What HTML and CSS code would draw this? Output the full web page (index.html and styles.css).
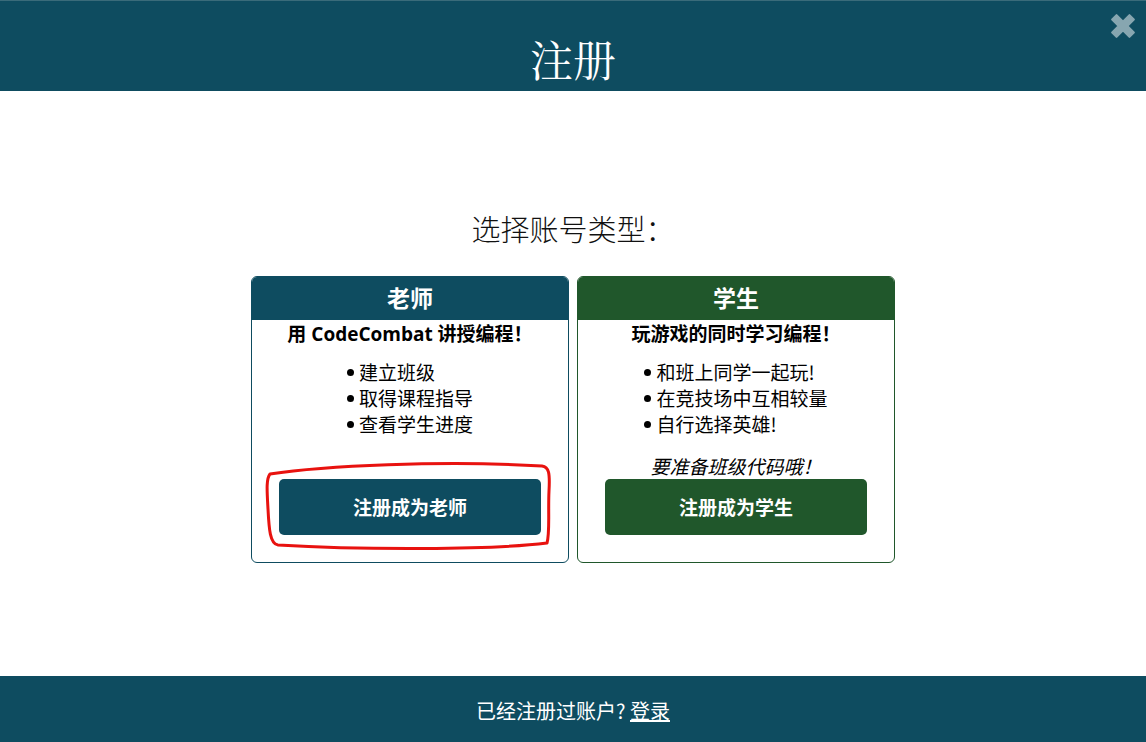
FILE: index.html
```html
<!DOCTYPE html>
<html lang="zh-CN">
<head>
<meta charset="utf-8">
<title>注册</title>
<link rel="stylesheet" href="styles.css">
</head>
<body>
<div class="page">
  <header class="top">
    <h1 class="title">注册</h1>
    <button class="close" aria-label="close">
      <svg width="28" height="28" viewBox="0 0 26 26"><path d="M3 7 L7 3 L13 9 L19 3 L23 7 L17 13 L23 19 L19 23 L13 17 L7 23 L3 19 L9 13 Z" fill="#fff" stroke="#fff" stroke-width="2" stroke-linejoin="round"/></svg>
    </button>
  </header>
  <main class="main">
    <h2 class="choose">选择账号类型：</h2>
    <div class="cards">
      <section class="card card-teacher">
        <div class="card-head">老师</div>
        <div class="card-body">
          <p class="card-sub">用 CodeCombat 讲授编程！</p>
          <ul class="perks">
            <li>建立班级</li>
            <li>取得课程指导</li>
            <li>查看学生进度</li>
          </ul>
          <p class="note note-hidden">要准备班级代码哦！</p>
          <button class="cta">注册成为老师</button>
        </div>
        <svg class="scribble" width="320" height="300" viewBox="0 0 320 300">
          <path d="M18 197 C70 189 190 183 290 189 C297 190 298 196 297 214 C296 236 298 256 295 266 C240 273 110 273 26 268 C18 267 17 252 16 232 C15 214 14 202 18 197" fill="none" stroke="#e8120f" stroke-width="3" stroke-linecap="round" stroke-linejoin="round"/>
        </svg>
      </section>
      <section class="card card-student">
        <div class="card-head">学生</div>
        <div class="card-body">
          <p class="card-sub">玩游戏的同时学习编程！</p>
          <ul class="perks">
            <li>和班上同学一起玩!</li>
            <li>在竞技场中互相较量</li>
            <li>自行选择英雄!</li>
          </ul>
          <p class="note">要准备班级代码哦！</p>
          <button class="cta">注册成为学生</button>
        </div>
      </section>
    </div>
  </main>
  <footer class="bottom">
    <span>已经注册过账户? <a href="#" class="login">登录</a></span>
  </footer>
</div>
</body>
</html>
```
FILE: styles.css
```css
html, body {
  margin: 0;
  padding: 0;
}
body {
  font-family: "Open Sans", "Noto Sans CJK SC", sans-serif;
  color: #000;
  background: #fff;
}
.page {
  height: 742px;
  display: flex;
  flex-direction: column;
}
.top {
  position: relative;
  height: 91px;
  background: #0e4c60;
  text-align: center;
  border-top: 1px solid #3a6b7a;
  box-sizing: border-box;
}
.title {
  margin: 0;
  padding-top: 35px;
  font-family: "Noto Serif CJK SC", "Liberation Serif", serif;
  font-weight: normal;
  font-size: 43px;
  line-height: 45px;
  color: #fff;
}
.close {
  position: absolute;
  top: 11px;
  right: 9px;
  padding: 0;
  border: 0;
  background: none;
  opacity: 0.5;
  cursor: pointer;
}
.close svg { display: block; }
.main {
  flex: 1;
  text-align: center;
}
.choose {
  margin: 117px 0 0;
  font-family: "Noto Sans CJK SC", sans-serif;
  font-weight: 300;
  font-size: 29px;
  line-height: 40px;
  color: #111;
}
.cards {
  display: flex;
  justify-content: center;
  gap: 8px;
  margin-top: 28px;
}
.card {
  position: relative;
  width: 318px;
  box-sizing: border-box;
  border: 1px solid #0e4c60;
  border-radius: 6px;
  background: #fff;
}
.card-student { border-color: #20572b; }
.card-head {
  height: 43px;
  line-height: 43px;
  border-radius: 5px 5px 0 0;
  background: #0e4c60;
  color: #fff;
  font-weight: bold;
  font-size: 23px;
}
.card-student .card-head { background: #20572b; }
.card-body {
  padding: 1px 0 27px;
}
.card-sub {
  margin: 0;
  font-weight: bold;
  font-size: 19px;
  line-height: 26px;
}
.perks {
  display: inline-block;
  margin: 12px 0 0;
  padding: 0;
  list-style: none;
  text-align: left;
  font-family: "Noto Sans CJK SC", sans-serif;
  font-size: 19px;
  line-height: 26px;
}
.perks li {
  display: flex;
  align-items: center;
}
.perks li::before {
  content: "";
  width: 7px;
  height: 7px;
  border-radius: 50%;
  background: #000;
  margin-right: 5px;
  flex: none;
}
.note {
  margin: 16px 0 0;
  font-family: "Noto Sans CJK SC", sans-serif;
  font-style: italic;
  font-size: 19px;
  line-height: 26px;
}
.note-hidden { visibility: hidden; }
.cta {
  display: block;
  width: 262px;
  height: 56px;
  margin: 0 auto;
  border: 0;
  border-radius: 5px;
  background: #0e4c60;
  color: #fff;
  font-family: "Open Sans", "Noto Sans CJK SC", sans-serif;
  font-weight: bold;
  font-size: 19px;
  cursor: pointer;
}
.card-student .cta { background: #20572b; }
.scribble {
  position: absolute;
  left: 0;
  top: 0;
  pointer-events: none;
}
.bottom {
  height: 66px;
  background: #0e4c60;
  color: #fff;
  font-family: "Noto Sans CJK SC", sans-serif;
  font-size: 20px;
  line-height: 70px;
  text-align: center;
}
.login {
  color: #fff;
  text-decoration: underline;
}
```
